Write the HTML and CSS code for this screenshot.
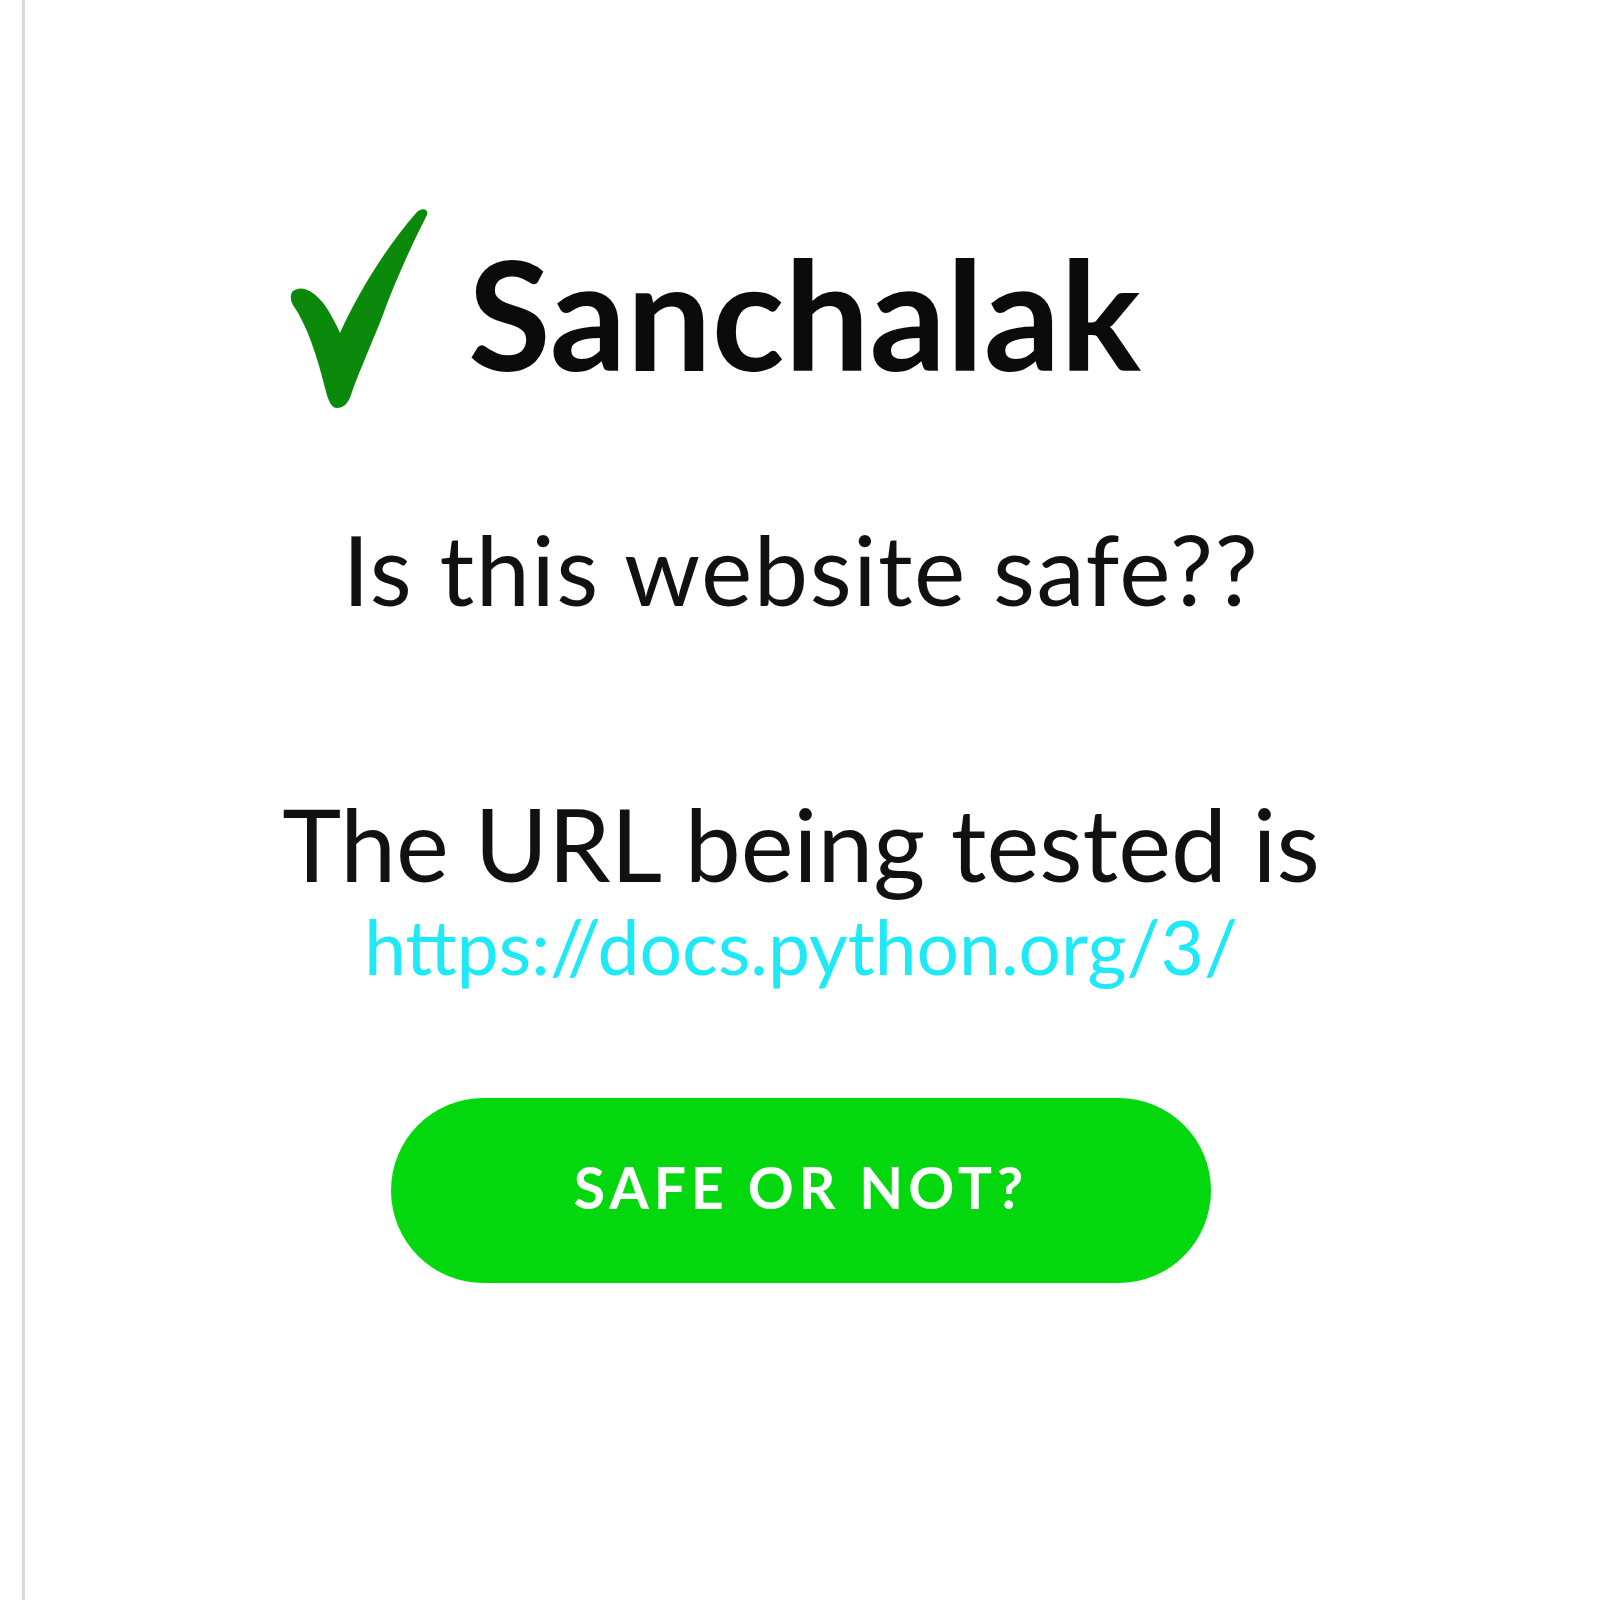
FILE: index.html
```html
<!DOCTYPE html>
<html lang="en">
<head>
<meta charset="utf-8">
<title>Sanchalak</title>
<link rel="stylesheet" href="styles.css">
</head>
<body>
<div class="frame">
  <main class="popup">
    <header class="brand">
      <svg class="check" viewBox="0 0 140 205" width="140" height="205" aria-hidden="true">
        <path d="M3,87 C12,80 25,88 34,100 C41,110 46,120 50,129 C66,93 95,44 127,8 C132,3 139,5 137,11 C122,40 105,78 94,108 C83,137 68,170 61,191 C58,200 53,204 47,204 C41,204 38,196 35,184 C27,152 17,121 3,101 C0,96 0,90 3,87 Z"/>
      </svg>
      <h1 class="title">Sanchalak</h1>
    </header>
    <h2 class="question">Is this website safe??</h2>
    <p class="label">The URL being tested is</p>
    <a class="url" href="#">https://docs.python.org/3/</a>
    <button class="cta" type="button">Safe or not?</button>
  </main>
</div>
</body>
</html>
```

FILE: styles.css
```css
html, body {
  margin: 0;
  padding: 0;
  background: #ffffff;
}

body {
  font-family: Lato, "Open Sans", sans-serif;
  color: #111111;
}

.frame {
  margin-left: 22px;
  border-left: 3px solid #d9d9d9;
  min-height: 1600px;
  box-sizing: border-box;
}

.popup {
  width: 1040px;
  margin-left: 256px;
  padding-top: 200px;
  display: flex;
  flex-direction: column;
  align-items: center;
}

.brand {
  align-self: flex-start;
  display: flex;
  align-items: flex-start;
  gap: 38px;
  margin-left: 9px;
}

.check {
  display: block;
  fill: #0a890a;
  margin-top: 4px;
}

.title {
  margin: 22px 0 0 0;
  font-size: 151px;
  line-height: 1.2;
  font-weight: 700;
  color: #0b0b0b;
}

.question {
  margin: 102px 0 0 0;
  font-size: 97px;
  line-height: 1.2;
  font-weight: 400;
  letter-spacing: 1.5px;
  color: #111111;
}

.label {
  margin: 156px 0 0 0;
  font-size: 100px;
  line-height: 1.2;
  color: #111111;
}

.url {
  display: block;
  margin-top: -2px;
  font-size: 75px;
  line-height: 1.2;
  color: #1fe9f7;
  text-decoration: none;
}

.cta {
  margin-top: 107px;
  width: 820px;
  height: 185px;
  padding: 0 0 8px 0;
  border: none;
  border-radius: 93px;
  background: #03d80f;
  color: #ffffff;
  font-family: Lato, "Open Sans", sans-serif;
  font-size: 57px;
  font-weight: 700;
  letter-spacing: 5px;
  text-transform: uppercase;
  cursor: pointer;
}
```
